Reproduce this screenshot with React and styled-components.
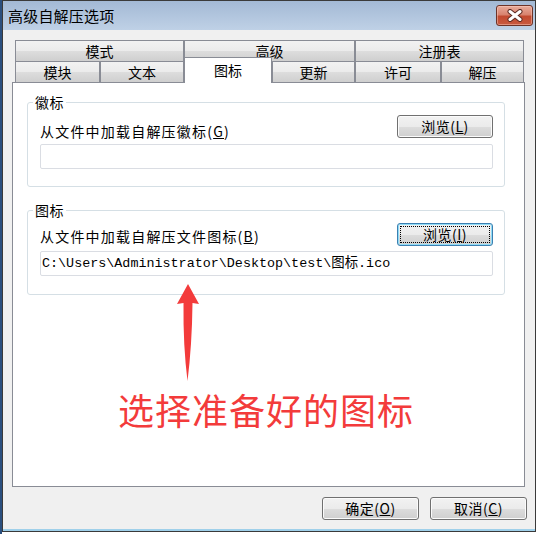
import React from "react";
import styled, { createGlobalStyle, css } from "styled-components";

const Global = createGlobalStyle`
  html, body { margin: 0; padding: 0; background: #ffffff; }
  body { font-family: "Noto Sans CJK SC", "Liberation Sans", sans-serif; color: #000; }
`;

const Screen = styled.div`
  width: 539px;
  height: 534px;
  box-sizing: border-box;
  border-left: 2px solid #2b4f7e;
  display: flex;
  align-items: flex-start;
`;

const Window = styled.div`
  width: 534px;
  height: 532px;
  box-sizing: border-box;
  border: 1px solid #3a3a3a;
  background: #f0f0f0;
  box-shadow: inset 0 -2px 0 #9fd0ea;
  display: flex;
  flex-direction: column;
`;

const TitleBar = styled.div`
  height: 29px;
  flex: none;
  display: flex;
  align-items: flex-start;
  justify-content: space-between;
  background: linear-gradient(#a3b9d5, #bfd1e6);
  padding-left: 5px;
`;

const Title = styled.div`
  font-size: 15px;
  line-height: 29px;
  letter-spacing: 0.2px;
`;

const CloseButton = styled.div`
  width: 37px;
  height: 21px;
  box-sizing: border-box;
  margin: 4px 2px 0 0;
  border: 1px solid #6d3328;
  border-radius: 3px;
  background: linear-gradient(#e8ab9b 0%, #d8836f 45%, #c24a30 55%, #c85a40 100%);
  box-shadow: inset 0 0 0 1px rgba(255, 210, 200, 0.45);
  display: flex;
  align-items: center;
  justify-content: center;
`;

const Client = styled.div`
  flex: 1;
  display: flex;
  flex-direction: column;
`;

const Body = styled.div`
  padding: 10px 10px 0 9px;
  display: flex;
  flex-direction: column;
`;

const TabRow = styled.div`
  display: flex;
  height: 21px;
  margin: 0 1px 0 3px;
  align-items: flex-end;
`;

const Tab = styled.div`
  box-sizing: border-box;
  height: 21px;
  flex: none;
  border: 1px solid #898c95;
  border-bottom: none;
  background: linear-gradient(#f2f2f2 0%, #ebebeb 50%, #dddddd 51%, #cfcfcf 100%);
  font-size: 14px;
  line-height: 20px;
  text-align: center;
  ${(p) =>
    p.$active &&
    css`
      height: 26px;
      margin-bottom: -1px;
      background: #ffffff;
      position: relative;
      z-index: 1;
      line-height: 24px;
    `}
`;

const Panel = styled.div`
  position: relative;
  width: 513px;
  height: 405px;
  box-sizing: border-box;
  border: 1px solid #898c95;
  background: #ffffff;
  padding: 19px 19px 0 14px;
  display: flex;
  flex-direction: column;
  gap: 23px;
`;

const Group = styled.div`
  position: relative;
  height: 85px;
  box-sizing: border-box;
  border: 1px solid #d5dfe5;
  border-radius: 3px;
  padding: 12px 11px 0 12px;
  display: flex;
  flex-direction: column;
`;

const GroupLabel = styled.div`
  position: absolute;
  top: -9px;
  left: 5px;
  padding: 0 2px;
  background: #ffffff;
  font-size: 14px;
  line-height: 16px;
  letter-spacing: 0.5px;
`;

const Row = styled.div`
  height: 23px;
  display: flex;
  justify-content: space-between;
  align-items: flex-end;
`;

const FieldLabel = styled.div`
  font-size: 14px;
  line-height: 14px;
  letter-spacing: 1.2px;
  margin-bottom: ${(p) => p.$lift}px;
  white-space: nowrap;
`;

const Button = styled.div`
  position: relative;
  width: ${(p) => p.$w || 96}px;
  height: 23px;
  box-sizing: border-box;
  border: 1px solid #707070;
  border-radius: 3px;
  background: linear-gradient(#f2f2f2 0%, #ebebeb 50%, #dddddd 51%, #cfcfcf 100%);
  box-shadow: inset 0 0 0 1px #fbfbfb;
  font-size: 14px;
  line-height: 21px;
  text-align: center;
  letter-spacing: 0.5px;
  white-space: nowrap;
  ${(p) =>
    p.$focused &&
    css`
      border-color: #3c7fb1;
      box-shadow: inset 0 0 0 1px #8fdcf7;
      &::after {
        content: "";
        position: absolute;
        inset: 2px;
        border: 1px dotted #000;
      }
    `}
`;

const TextBox = styled.div`
  height: 25px;
  box-sizing: border-box;
  margin-top: ${(p) => p.$gap}px;
  border: 1px solid #dadde3;
  border-radius: 2px;
  background: #ffffff;
  padding-left: 1px;
  font-family: "Liberation Mono", "Noto Sans CJK SC", monospace;
  font-size: 13.4px;
  line-height: 23px;
  white-space: nowrap;
  overflow: hidden;
`;

const Arrow = styled.svg`
  position: absolute;
  left: 162px;
  top: 200px;
`;

const Annotation = styled.div`
  margin-top: 71px;
  text-align: center;
  color: #f33b3b;
  font-size: 36px;
  line-height: 40px;
  letter-spacing: 1px;
`;

const Footer = styled.div`
  display: flex;
  justify-content: flex-end;
  gap: 11px;
  padding: 10px 8px 0 0;
`;

const Key = ({ k }) => (
  <>
    (<u>{k}</u>)
  </>
);

export default function App() {
  return (
    <>
      <Global />
      <Screen>
        <Window>
          <TitleBar>
            <Title>高级自解压选项</Title>
            <CloseButton>
              <svg width="16" height="13" viewBox="0 0 16 13">
                <path d="M3 2.5 L13 10.5 M13 2.5 L3 10.5" stroke="#5b2a22" strokeWidth="5" strokeLinecap="round" />
                <path d="M3 2.5 L13 10.5 M13 2.5 L3 10.5" stroke="#ffffff" strokeWidth="3" strokeLinecap="round" />
              </svg>
            </CloseButton>
          </TitleBar>
          <Client>
            <Body>
              <TabRow>
                <Tab style={{ width: 169 }}>模式</Tab>
                <Tab style={{ width: 171 }}>高级</Tab>
                <Tab style={{ width: 169 }}>注册表</Tab>
              </TabRow>
              <TabRow>
                <Tab style={{ width: 85 }}>模块</Tab>
                <Tab style={{ width: 84 }}>文本</Tab>
                <Tab $active style={{ width: 88 }}>图标</Tab>
                <Tab style={{ width: 83 }}>更新</Tab>
                <Tab style={{ width: 86 }}>许可</Tab>
                <Tab style={{ width: 83 }}>解压</Tab>
              </TabRow>
              <Panel>
                <Group>
                  <GroupLabel>徽标</GroupLabel>
                  <Row>
                    <FieldLabel $lift={0}>
                      从文件中加载自解压徽标<Key k="G" />
                    </FieldLabel>
                    <Button>
                      浏览<Key k="L" />
                    </Button>
                  </Row>
                  <TextBox $gap={6} />
                </Group>
                <Group>
                  <GroupLabel>图标</GroupLabel>
                  <Row>
                    <FieldLabel $lift={3}>
                      从文件中加载自解压文件图标<Key k="B" />
                    </FieldLabel>
                    <Button $focused>
                      浏览<Key k="I" />
                    </Button>
                  </Row>
                  <TextBox $gap={5}>C:\Users\Administrator\Desktop\test\图标.ico</TextBox>
                </Group>
                <Arrow width="26" height="100" viewBox="0 0 26 100">
                  <path d="M13 1 L24 21 L17.5 20 Q17 62 12.5 98 Q8 62 8.5 20 L2 21 Z" fill="#f33b3b" />
                </Arrow>
                <Annotation>选择准备好的图标</Annotation>
              </Panel>
            </Body>
            <Footer>
              <Button $w={97}>
                确定<Key k="O" />
              </Button>
              <Button $w={97}>
                取消<Key k="C" />
              </Button>
            </Footer>
          </Client>
        </Window>
      </Screen>
    </>
  );
}
